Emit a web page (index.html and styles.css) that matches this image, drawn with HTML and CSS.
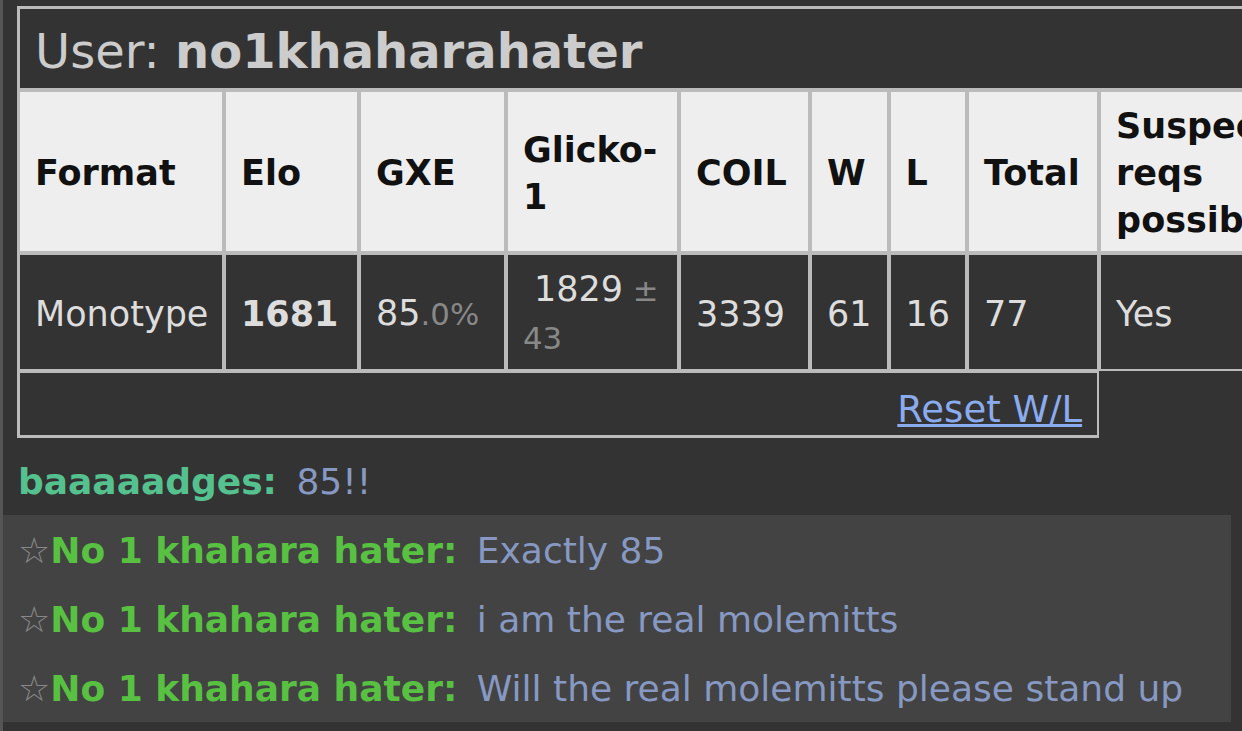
FILE: index.html
```html
<!DOCTYPE html>
<html lang="en">
<head>
    <meta charset="UTF-8">
    <meta name="viewport" content="width=device-width, initial-scale=1.0">
    <title>User: no1khaharahater</title>
    <link rel="stylesheet" href="styles.css">
</head>
<body>
    <div class="page">
        <div class="ladder">
            <table>
                <tr>
                    <th colspan="9" class="title first">User: <strong>no1khaharahater</strong></th>
                </tr>
                <tr class="head">
                    <th class="first col-format">Format</th>
                    <th class="col-elo">Elo</th>
                    <th class="col-gxe">GXE</th>
                    <th class="col-glicko">Glicko-1</th>
                    <th class="col-coil">COIL</th>
                    <th class="col-w">W</th>
                    <th class="col-l">L</th>
                    <th class="col-total">Total</th>
                    <th class="col-suspect">Suspect reqs possible</th>
                </tr>
                <tr class="data">
                    <td class="first col-format">Monotype</td>
                    <td><strong>1681</strong></td>
                    <td>85<small>.0%</small></td>
                    <td class="glicko">1829<small> ± 43</small></td>
                    <td>3339</td>
                    <td>61</td>
                    <td>16</td>
                    <td>77</td>
                    <td>Yes</td>
                </tr>
                <tr>
                    <td colspan="8" class="first foot"><a href="#">Reset W/L</a></td>
                </tr>
            </table>
        </div>

        <div class="chat">
            <div class="msg"><strong class="name teal">baaaaadges:</strong> <em class="text">85!!</em></div>
            <div class="highlight">
                <div class="msg"><span class="star">☆</span><strong class="name green">No 1 khahara hater:</strong> <em class="text">Exactly 85</em></div>
                <div class="msg"><span class="star">☆</span><strong class="name green">No 1 khahara hater:</strong> <em class="text">i am the real molemitts</em></div>
                <div class="msg"><span class="star">☆</span><strong class="name green">No 1 khahara hater:</strong> <em class="text">Will the real molemitts please stand up</em></div>
            </div>
        </div>
    </div>
</body>
</html>
```

FILE: styles.css
```css
html, body { margin: 0; padding: 0; background: #333; overflow: hidden; }
body { font-family: "DejaVu Sans", Verdana, sans-serif; font-size: 35px; color: #ddd; }
.page { border-left: 3px solid #555; min-height: 100vh; box-sizing: border-box; }

/* ladder table */
.ladder { padding: 6px 0 0 14px; overflow: hidden; }
table { border-collapse: separate; border-spacing: 0; width: max-content; }
th, td { border: 2px solid #bbb; padding: 11px 15px 7px; line-height: 47px; text-align: left; vertical-align: middle; }
.first { border-left-width: 3px; }
.title { background: #333; color: #ccc; font-weight: normal; font-size: 48px; line-height: 62px; padding: 11px 15px 6px; border-top-width: 3px; border-right: 0; white-space: nowrap; }
.title strong { font-weight: bold; }
.head th { background: #eee; color: #111; font-weight: bold; }
.data td { background: #333; color: #ddd; }
small { font-size: 0.88em; color: #888; }
.glicko { text-indent: 11px; }
.foot { text-align: right; font-size: 37px; padding: 13px 15px 2px; border-bottom-width: 3px; }
.foot a { color: #8aacee; }

.col-format { width: 174px; padding-right: 13px; }
.col-elo { width: 101px; }
.col-gxe { width: 113px; }
.col-glicko { width: 139px; }
.col-coil { width: 97px; }
.col-w { width: 44px; }
.col-l { width: 43px; }
.col-total { width: 98px; }
.col-suspect { width: 170px; }

/* chat log */
.chat { margin: 8px 11px 0 0; font-size: 36px; }
.msg { padding: 12px 15px 10px; line-height: 47px; white-space: nowrap; }
.highlight { background: #434343; }
.name { font-weight: bold; }
.teal { color: #55c18f; }
.green { color: #58c141; }
.star { color: #888; }
.text { font-style: normal; color: #8799c2; margin-left: 8px; }
```
